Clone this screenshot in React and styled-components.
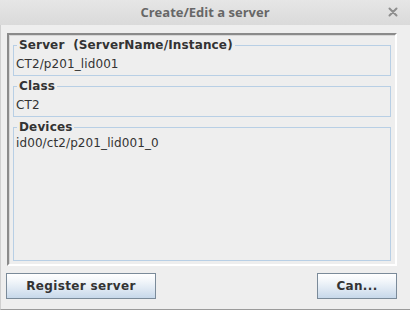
import React from "react";
import styled, { createGlobalStyle } from "styled-components";

const Global = createGlobalStyle`
  html, body { margin: 0; padding: 0; background: #eeeeee; }
  #root { width: 410px; height: 310px; }
`;

const Window = styled.div`
  box-sizing: border-box;
  width: 410px;
  height: 310px;
  display: flex;
  flex-direction: column;
  background: #eeeeee;
  border-left: 1px solid #cfcfcf;
  border-bottom: 1px solid #9a9a9a;
  font-family: "DejaVu Sans", sans-serif;
  font-size: 12px;
  color: #333333;
`;

const TitleBar = styled.div`
  height: 25px;
  flex: none;
  display: flex;
  align-items: center;
  justify-content: center;
  position: relative;
  background: linear-gradient(#e6e6e6, #dadada);
  margin-left: -1px;
`;

const Title = styled.span`
  font-family: "Open Sans", "Noto Sans", sans-serif;
  font-weight: 700;
  font-size: 13px;
  color: #676767;
  line-height: 25px;
`;

const Close = styled.span`
  position: absolute;
  right: 11px;
  top: 5px;
  width: 12px;
  height: 14px;
  display: flex;
  align-items: center;
  justify-content: center;
`;

const Body = styled.div`
  flex: 1;
  display: flex;
  flex-direction: column;
  padding: 8px 13px 10px 6px;
  gap: 7px;
  min-height: 0;
`;

const Panel = styled.div`
  flex: 1;
  display: flex;
  flex-direction: column;
  gap: 3px;
  padding: 3px 4px;
  border: 2px solid;
  border-color: #8a8a8a #ffffff #ffffff #8a8a8a;
  box-shadow: inset 1px 1px 0 #d6d6d6;
  min-height: 0;
`;

const Group = styled.fieldset`
  margin: 0;
  padding: 0 2px 3px 2px;
  border: 1px solid #b8cfe5;
  min-width: 0;
  ${(p) => (p.$grow ? "flex: 1;" : "flex: none;")}
`;

const Legend = styled.legend`
  margin-left: 1px;
  padding: 0 2px;
  font-weight: 700;
  font-size: 12px;
  line-height: 14px;
  letter-spacing: 0.15px;
  color: #333333;
  white-space: pre;
`;

const Value = styled.div`
  padding-top: ${(p) => p.$top}px;
  line-height: 15px;
  font-size: 12px;
  letter-spacing: 0.1px;
  color: #333333;
  white-space: pre;
`;

const ButtonRow = styled.div`
  flex: none;
  display: flex;
  justify-content: space-between;
  margin-left: -1px;
`;

const Button = styled.button`
  box-sizing: border-box;
  height: 26px;
  width: ${(p) => p.$w}px;
  border: 1px solid #7a8a99;
  border-radius: 0;
  background: linear-gradient(#ffffff 0%, #f2f6fa 30%, #c7d8ea 100%);
  font-family: "DejaVu Sans", sans-serif;
  font-weight: 700;
  font-size: 12px;
  letter-spacing: 0.35px;
  color: #333333;
  padding: 0;
  margin: 0;
`;

export default function App() {
  return (
    <>
      <Global />
      <Window>
        <TitleBar>
          <Title>Create/Edit a server</Title>
          <Close>
            <svg width="10" height="10" viewBox="0 0 10 10">
              <path d="M1.5 1.5 L8.5 8.5 M8.5 1.5 L1.5 8.5" stroke="#8e8e8e" strokeWidth="2" strokeLinecap="round" />
            </svg>
          </Close>
        </TitleBar>
        <Body>
          <Panel>
            <Group>
              <Legend>Server  (ServerName/Instance)</Legend>
              <Value $top={5}>CT2/p201_lid001</Value>
            </Group>
            <Group>
              <Legend>Class</Legend>
              <Value $top={5}>CT2</Value>
            </Group>
            <Group $grow>
              <Legend>Devices</Legend>
              <Value $top={2}>id00/ct2/p201_lid001_0</Value>
            </Group>
          </Panel>
          <ButtonRow>
            <Button $w={150}>Register server</Button>
            <Button $w={80}>Can...</Button>
          </ButtonRow>
        </Body>
      </Window>
    </>
  );
}
